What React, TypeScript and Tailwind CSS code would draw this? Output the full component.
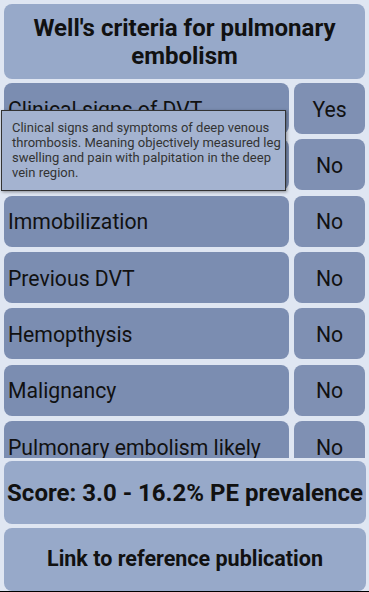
import React from "react";

const rows: { label: string; value: string }[] = [
  { label: "Clinical signs of DVT", value: "Yes" },
  { label: "Heart rate > 100", value: "No" },
  { label: "Immobilization", value: "No" },
  { label: "Previous DVT", value: "No" },
  { label: "Hemopthysis", value: "No" },
  { label: "Malignancy", value: "No" },
  { label: "Pulmonary embolism likely", value: "No" },
];

export default function App() {
  return (
    <div
      className="relative w-[369px] h-[592px] bg-[#dfe6f2] flex flex-col px-1 pt-1 overflow-hidden text-[#111]"
      style={{ fontFamily: "Roboto, 'Noto Sans', sans-serif" }}
    >
      <div className="h-[75px] shrink-0 rounded-lg bg-[#97a9c9] flex items-center justify-center text-center font-bold text-[24px] leading-[28px] px-2">
        Well's criteria for pulmonary embolism
      </div>
      <div className="mt-1 h-[375px] shrink-0 overflow-hidden">
        <div className="grid grid-cols-[285px_71px] gap-x-[5px] gap-y-[5.33px] auto-rows-[51px]">
          {rows.map((r) => (
            <React.Fragment key={r.label}>
              <div className="rounded-lg bg-[#7b8db1] flex items-center pl-1 pt-[2px] text-[21.2px] whitespace-nowrap overflow-hidden">
                {r.label}
              </div>
              <div className="rounded-lg bg-[#7f90b3] flex items-center justify-center pt-[2px] text-[21.2px]">
                {r.value}
              </div>
            </React.Fragment>
          ))}
        </div>
      </div>
      <div className="mt-[3px] h-[63px] shrink-0 rounded-lg bg-[#97a9c9] flex items-center justify-center font-bold text-[24px] whitespace-nowrap -mr-[1px]">
        Score: 3.0 - 16.2% PE prevalence
      </div>
      <div className="mt-1 h-[63px] shrink-0 rounded-lg bg-[#97a9c9] flex items-center justify-center font-bold text-[21.5px] -mr-[1px]">
        Link to reference publication
      </div>
      <div className="h-px bg-black -mx-1 shrink-0" />
      <div className="absolute left-[1px] top-[110px] w-[285px] h-[81px] bg-[#a4b3d0] border border-[#333] shadow-[1px_1px_3px_rgba(0,0,0,0.4)] pl-[10px] pr-[2px] pt-[9px] text-[13px] leading-[15px] text-[#333]">
        Clinical signs and symptoms of deep venous thrombosis. Meaning objectively measured leg swelling and pain with palpitation in the deep vein region.
      </div>
    </div>
  );
}
